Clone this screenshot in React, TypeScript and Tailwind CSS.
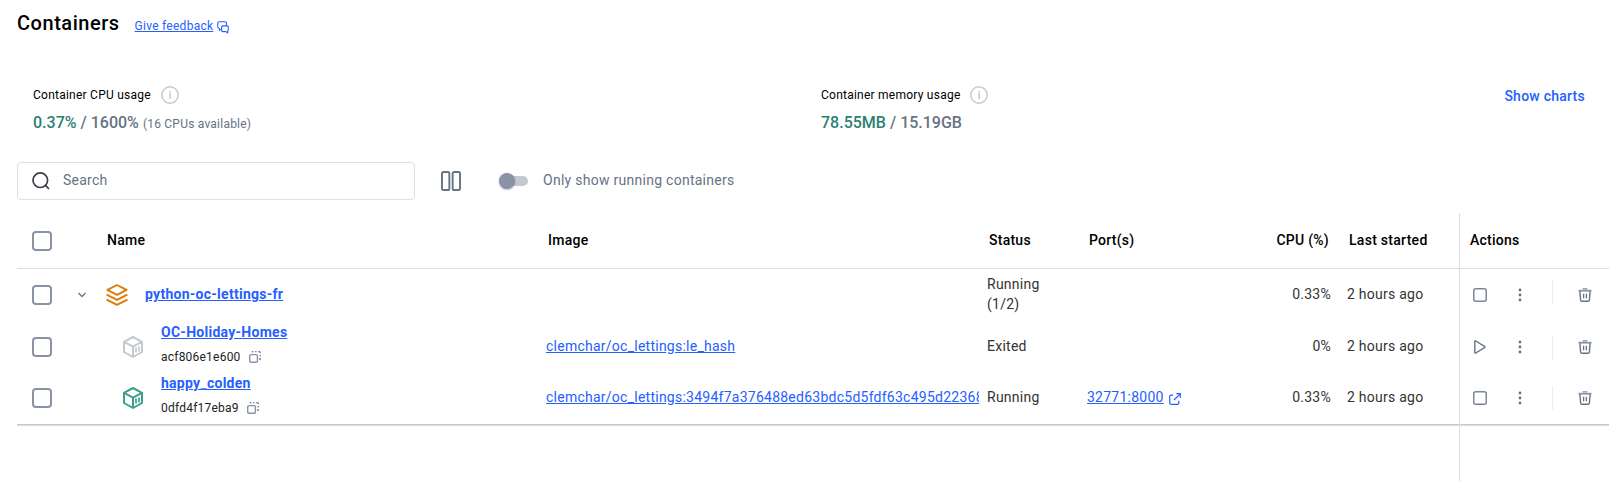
import type { ReactNode } from "react";

const COLUMNS = "grid grid-cols-[521px_441px_100px_100px_160px_120px_150px]";

type IconProps = { className?: string };

function FeedbackIcon() {
  return (
    <svg width="12" height="13" viewBox="0 0 12 13" fill="none" stroke="#2560ff" strokeWidth="1.1" strokeLinejoin="round" strokeLinecap="round">
      <path d="M3.4 8.3L2.4 9.5V7.6L.7 6.2V2.1Q.7.7 2.1.7H8.1Q9.5.7 9.5 2.1V4.2" />
      <path d="M5.8 4.9H10.1Q11.3 4.9 11.3 6.1V9.3L10.7 10.2V12L9.1 10.6H5.8Q4.6 10.6 4.6 9.4V6.1Q4.6 4.9 5.8 4.9Z" />
    </svg>
  );
}

function InfoIcon() {
  return (
    <svg width="18" height="18" viewBox="0 0 18 18" fill="none">
      <circle cx="9" cy="9" r="8.2" stroke="#c9c9c9" strokeWidth="1.5" />
      <path d="M9.2 5V6.4M8 8H9.2V13" stroke="#c9c9c9" strokeWidth="1.5" />
    </svg>
  );
}

function SearchIcon() {
  return (
    <svg width="18" height="18" viewBox="0 0 18 18" fill="none" stroke="#393f49" strokeWidth="1.7">
      <circle cx="8.3" cy="8.2" r="7.3" />
      <path d="M13.2 13.2L17 17" />
    </svg>
  );
}

function ColumnsIcon() {
  return (
    <svg width="20" height="20" viewBox="0 0 20 20" fill="none" stroke="#677285" strokeWidth="1.9">
      <rect x=".95" y=".95" width="7.4" height="18.1" rx="1.6" />
      <rect x="11.65" y=".95" width="7.4" height="18.1" rx="1.6" />
    </svg>
  );
}

function ChevronIcon() {
  return (
    <svg width="8" height="6" viewBox="0 0 8 6" fill="none" stroke="#677285" strokeWidth="1.3">
      <path d="M.5 1L4 4.5L7.5 1" />
    </svg>
  );
}

function StackIcon() {
  return (
    <svg width="22" height="22" viewBox="0 0 22 22" fill="none" stroke="#de7a06" strokeWidth="1.9" strokeLinejoin="round">
      <path d="M1.4 5.9L11 1L20.6 5.9L11 10.8Z" />
      <path d="M.6 10.6L11 15.9L21.4 10.6" />
      <path d="M.6 15.6L11 20.9L21.4 15.6" />
    </svg>
  );
}

function CubeIcon({ className = "" }: IconProps) {
  return (
    <svg className={className} width="20" height="22" viewBox="0 0 20 22" fill="none" stroke="currentColor" strokeWidth="2" strokeLinejoin="round">
      <path d="M10 1L19 5.9V16L10 21L1 16V5.9Z" />
      <path d="M1 5.9L10 10.6L19 5.9M10 10.6V21" />
      <path d="M13 11.6V16.6M16 10.6V15.6" strokeWidth="1.7" />
    </svg>
  );
}

function CopyIcon() {
  return (
    <svg width="12" height="12" viewBox="0 0 12 12" fill="none" stroke="#8993a5" strokeWidth="1.4">
      <rect x=".7" y="3.6" width="7.7" height="7.7" rx="1.4" />
      <path d="M3.4 1.6V.6H4.6M6 .6H7.6M9 .6H9.9Q11.2.7 11.3 1.6V2.3M11.3 3.9V5.5M11.3 7V8.2H10" />
    </svg>
  );
}

function ExternalIcon() {
  return (
    <svg width="12" height="12" viewBox="0 0 12 12" fill="none" stroke="#2560ff" strokeWidth="1.2">
      <path d="M4.2 2.2H2.1Q.7 2.2.7 3.6V9.9Q.7 11.3 2.1 11.3H8.4Q9.8 11.3 9.8 9.9V7.8" />
      <path d="M5 7L11.2.8M7.3.7H11.3V4.7" />
    </svg>
  );
}

function StopIcon() {
  return (
    <svg width="14" height="14" viewBox="0 0 14 14" fill="none" stroke="#7c8698" strokeWidth="1.5">
      <rect x=".75" y=".75" width="12.5" height="12.5" rx="2" />
    </svg>
  );
}

function PlayIcon() {
  return (
    <svg width="14" height="14" viewBox="0 0 14 14" fill="none" stroke="#677285" strokeWidth="1.4" strokeLinejoin="round">
      <path d="M1.8 1.6Q1.8.5 2.8 1L11.5 6.4Q12.4 7 11.5 7.6L2.8 13Q1.8 13.5 1.8 12.4Z" />
    </svg>
  );
}

function MoreIcon() {
  return (
    <svg width="4" height="14" viewBox="0 0 4 14" fill="#677285">
      <circle cx="2" cy="2" r="1.4" />
      <circle cx="2" cy="7" r="1.4" />
      <circle cx="2" cy="12" r="1.4" />
    </svg>
  );
}

function TrashIcon() {
  return (
    <svg width="14" height="14" viewBox="0 0 14 14" fill="none" stroke="#677285" strokeWidth="1.4">
      <path d="M4.6.8H9.4" stroke="#9aa3b2" strokeWidth="1.5" />
      <path d="M.5 2.7H13.5" stroke="#8993a5" strokeWidth="1.8" />
      <path d="M1.9 3.3L2.6 12Q2.7 13.3 4 13.3H10Q11.3 13.3 11.4 12L12.1 3.3" />
      <path d="M5.6 5.8V10.2M8.4 5.8V10.2" strokeWidth="1.3" />
    </svg>
  );
}

function Checkbox() {
  return <span className="block size-5 shrink-0 rounded-[4px] border-2 border-[#8993a5]" />;
}

function Usage({ label, used, total, note }: { label: string; used: string; total: string; note?: string }) {
  return (
    <div>
      <div className="flex h-[18px] items-center gap-[10px]">
        <span className="text-xs tracking-[0.24px] text-black">{label}</span>
        <InfoIcon />
      </div>
      <div className="mt-[7px] flex h-6 items-baseline whitespace-pre text-base font-medium leading-6 tracking-normal text-[#677285]">
        <span className="text-[#2e7f74]">{used}</span>
        <span> / {total}</span>
        {note && <span className="ml-[4px] text-xs font-normal tracking-[0.22px]">{note}</span>}
      </div>
    </div>
  );
}

function Actions({ running, dividerClass }: { running: boolean; dividerClass: string }) {
  return (
    <div className="flex h-full items-center pl-[14px]">
      {running ? <StopIcon /> : <PlayIcon />}
      <span className="ml-[31px]">
        <MoreIcon />
      </span>
      <span className={`ml-[30px] h-6 w-px bg-[#ebecee] ${dividerClass}`} />
      <span className="ml-[25px]">
        <TrashIcon />
      </span>
    </div>
  );
}

type RowProps = {
  height: string;
  name: ReactNode;
  image?: string;
  status: ReactNode;
  port?: string;
  cpu: string;
  running: boolean;
  dividerClass?: string;
};

function Row({ height, name, image, status, port, cpu, running, dividerClass = "" }: RowProps) {
  return (
    <div className={`${COLUMNS} ${height} items-center text-[#333]`}>
      <div className="flex h-full items-center pl-[15px]">
        <Checkbox />
        {name}
      </div>
      <div className="overflow-hidden whitespace-nowrap pb-0.5 pl-2">
        {image && <a className="text-[#2560ff] underline">{image}</a>}
      </div>
      <div className="pb-0.5 pl-2">{status}</div>
      <div className="flex items-center pb-0.5 pl-2">
        {port && (
          <>
            <a className="text-[#2560ff] underline">{port}</a>
            <span className="ml-[5px] mt-1">
              <ExternalIcon />
            </span>
          </>
        )}
      </div>
      <div className="pb-0.5 pr-2 text-right">{cpu}</div>
      <div className="pb-0.5 pl-2">2 hours ago</div>
      <Actions running={running} dividerClass={dividerClass} />
    </div>
  );
}

function ChildName({ name, id, color }: { name: string; id: string; color: string }) {
  return (
    <>
      <CubeIcon className={`ml-[71px] ${color}`} />
      <div className="ml-[18px] pb-[5px]">
        <a className="block font-bold leading-5 tracking-[0.27px] text-[#2560ff] underline">{name}</a>
        <div className="mt-[5px] flex h-5 items-center gap-2 text-xs leading-5 tracking-[0.22px] text-[#222]">
          {id}
          <CopyIcon />
        </div>
      </div>
    </>
  );
}

export default function App() {
  return (
    <main className="flex h-[481px] w-[1623px] flex-col overflow-hidden bg-white pl-[17px] font-['Roboto',sans-serif] text-sm leading-5 tracking-[0.25px]">
      <header className="flex h-[38px] items-baseline pt-[9px]">
        <h1 className="text-xl font-medium leading-7 tracking-[0.53px] text-black">Containers</h1>
        <a className="ml-[15px] text-xs tracking-[0.26px] text-[#2560ff] underline">Give feedback</a>
        <span className="ml-[4px] self-start pt-3">
          <FeedbackIcon />
        </span>
      </header>

      <section className="flex h-[124px] items-start pl-4 pt-12">
        <div className="w-[788px]">
          <Usage label="Container CPU usage" used="0.37%" total="1600%" note="(16 CPUs available)" />
        </div>
        <Usage label="Container memory usage" used="78.55MB" total="15.19GB" />
        <button className="ml-auto mr-[38px] font-medium text-[#2560ff]">Show charts</button>
      </section>

      <section className="flex h-[38px] items-center">
        <div className="flex h-[38px] w-[398px] items-center rounded-[4px] border border-[#dedfe1] pl-[14px]">
          <SearchIcon />
          <span className="ml-[13px] pb-0.5 text-[#677285]">Search</span>
        </div>
        <span className="ml-[26px]">
          <ColumnsIcon />
        </span>
        <span className="ml-[38px] flex h-4 w-[29px] items-center">
          <span className="z-10 size-4 shrink-0 rounded-full bg-[#8993a5] shadow-[0_1px_2px_rgba(0,0,0,0.25)]" />
          <span className="-ml-2 h-[10px] w-[21px] rounded-full bg-[#c4c8d1]" />
        </span>
        <span className="ml-[15px] pb-0.5 tracking-[0.27px] text-[#677285]">Only show running containers</span>
      </section>

      <section className="relative mt-[13px] h-[268px] w-[1592px]">
        <div className={`${COLUMNS} h-14 items-center border-b border-[#dcdddf] font-medium text-black`}>
          <div className="flex h-full items-center pl-[15px]">
            <Checkbox />
            <span className="ml-[55px] pb-px">Name</span>
          </div>
          <div className="pb-px pl-[10px]">Image</div>
          <div className="pb-px pl-[10px]">Status</div>
          <div className="pb-px pl-[10px]">Port(s)</div>
          <div className="pb-px pr-[10px] text-right">CPU (%)</div>
          <div className="pb-px pl-[10px] tracking-[0.28px]">Last started</div>
          <div className="pb-px pl-[11px]">Actions</div>
        </div>

        <Row
          height="h-[52px]"
          name={
            <>
              <span className="ml-[26px]">
                <ChevronIcon />
              </span>
              <span className="ml-5">
                <StackIcon />
              </span>
              <a className="ml-[17px] pb-0.5 font-bold tracking-[0.27px] text-[#2560ff] underline">python-oc-lettings-fr</a>
            </>
          }
          status={
            <>
              Running
              <br />
              (1/2)
            </>
          }
          cpu="0.33%"
          running
          dividerClass="mb-2"
        />
        <Row
          height="h-[52px]"
          name={<ChildName name="OC-Holiday-Homes" id="acf806e1e600" color="text-[#c4c8d1]" />}
          image="clemchar/oc_lettings:le_hash"
          status="Exited"
          cpu="0%"
          running={false}
        />
        <Row
          height="h-[50px]"
          name={<ChildName name="happy_colden" id="0dfd4f17eba9" color="text-[#3a9f8b]" />}
          image="clemchar/oc_lettings:3494f7a376488ed63bdc5d5fdf63c495d22368"
          status="Running"
          port="32771:8000"
          cpu="0.33%"
          running
        />
        <div className="mt-px h-[2px] border-t border-[#c4c8d1] bg-[#dcdddf]" />
        <div className="absolute bottom-0 left-[1442px] top-0 w-px bg-[#dcdddf]" />
      </section>
    </main>
  );
}
